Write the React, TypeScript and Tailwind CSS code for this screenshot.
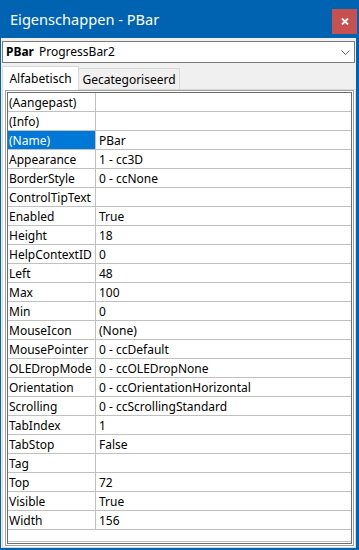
import React from "react";

const rows: [string, string][] = [
  ["(Aangepast)", ""],
  ["(Info)", ""],
  ["(Name)", "PBar"],
  ["Appearance", "1 - cc3D"],
  ["BorderStyle", "0 - ccNone"],
  ["ControlTipText", ""],
  ["Enabled", "True"],
  ["Height", "18"],
  ["HelpContextID", "0"],
  ["Left", "48"],
  ["Max", "100"],
  ["Min", "0"],
  ["MouseIcon", "(None)"],
  ["MousePointer", "0 - ccDefault"],
  ["OLEDropMode", "0 - ccOLEDropNone"],
  ["Orientation", "0 - ccOrientationHorizontal"],
  ["Scrolling", "0 - ccScrollingStandard"],
  ["TabIndex", "1"],
  ["TabStop", "False"],
  ["Tag", ""],
  ["Top", "72"],
  ["Visible", "True"],
  ["Width", "156"],
];

export default function App() {
  return (
    <div
      className="w-[359px] h-[550px] bg-[#0063b1] flex flex-col pl-[1px] pr-[3px] pb-[2px] text-black"
      style={{ fontFamily: '"Noto Sans", sans-serif' }}
    >
      {/* Title bar */}
      <div className="h-[38px] flex items-start shrink-0">
        <div className="mt-[10px] ml-[9px] text-white text-[14.6px] leading-[19px]">
          Eigenschappen - PBar
        </div>
        <div className="ml-auto -mr-[1px] mt-[9px] w-[25px] h-[25px] bg-[#c75050] flex items-center justify-center">
          <svg width="8" height="7" viewBox="0 0 8 7">
            <path d="M1 0.5 L7 6.5 M7 0.5 L1 6.5" stroke="#ffffff" strokeWidth="1.8" fill="none" />
          </svg>
        </div>
      </div>

      {/* Client area */}
      <div className="flex-1 bg-[#f0f0f0] flex flex-col pt-[3px] min-h-0">
        {/* Combo box */}
        <div className="mx-[1px] h-[22px] border border-[#7a7a7a] bg-white flex items-center pl-[3px] pr-[4px] text-[12px] leading-[16px] shrink-0">
          <span className="font-bold">PBar</span>
          <span className="ml-[5px]">ProgressBar2</span>
          <svg className="ml-auto" width="9" height="5" viewBox="0 0 9 5">
            <path d="M0.5 0.5 L4.5 4.5 L8.5 0.5" stroke="#606060" strokeWidth="1" fill="none" />
          </svg>
        </div>

        {/* Tabs */}
        <div className="mt-[3px] ml-[1px] flex items-start h-[23px] shrink-0 relative z-10">
          <div className="w-[77px] h-[24px] border border-b-0 border-[#d9d9d9] bg-white flex items-center justify-center text-[12px] leading-[16px]">
            Alfabetisch
          </div>
          <div className="-ml-[1px] mt-[2px] w-[102px] h-[21px] border border-b-0 border-[#d9d9d9] bg-[#f0f0f0] flex items-center justify-center pt-[1px] text-[12px] leading-[16px]">
            Gecategoriseerd
          </div>
        </div>

        {/* Tab page */}
        <div className="flex-1 ml-[1px] border border-[#d9d9d9] bg-white pl-[2px] pr-[1px] pb-[1px] flex flex-col min-h-0">
          <div className="flex-1 border border-[#a0a0a0] p-[1px] bg-white flex flex-col min-h-0">
            <div className="flex-1 border border-[#6d6d6d] bg-white flex flex-col min-h-0 text-[12px] leading-[16px]">
              {rows.map(([name, value]) => {
                const sel = name === "(Name)";
                return (
                  <div key={name} className="h-[19px] flex border-b border-[#c0c0c0] shrink-0">
                    <div
                      className={
                        "w-[88px] border-r border-[#c0c0c0] pl-[1px] pt-[1px] flex items-center whitespace-nowrap overflow-hidden " +
                        (sel ? "bg-[#0078d7] text-white" : "")
                      }
                    >
                      {name}
                    </div>
                    <div className="flex-1 pl-[3px] pt-[1px] flex items-center whitespace-nowrap overflow-hidden">
                      {value}
                    </div>
                  </div>
                );
              })}
              <div className="h-[12px] border-b border-[#c0c0c0] shrink-0" />
              <div className="flex-1" />
            </div>
          </div>
        </div>
      </div>
    </div>
  );
}
